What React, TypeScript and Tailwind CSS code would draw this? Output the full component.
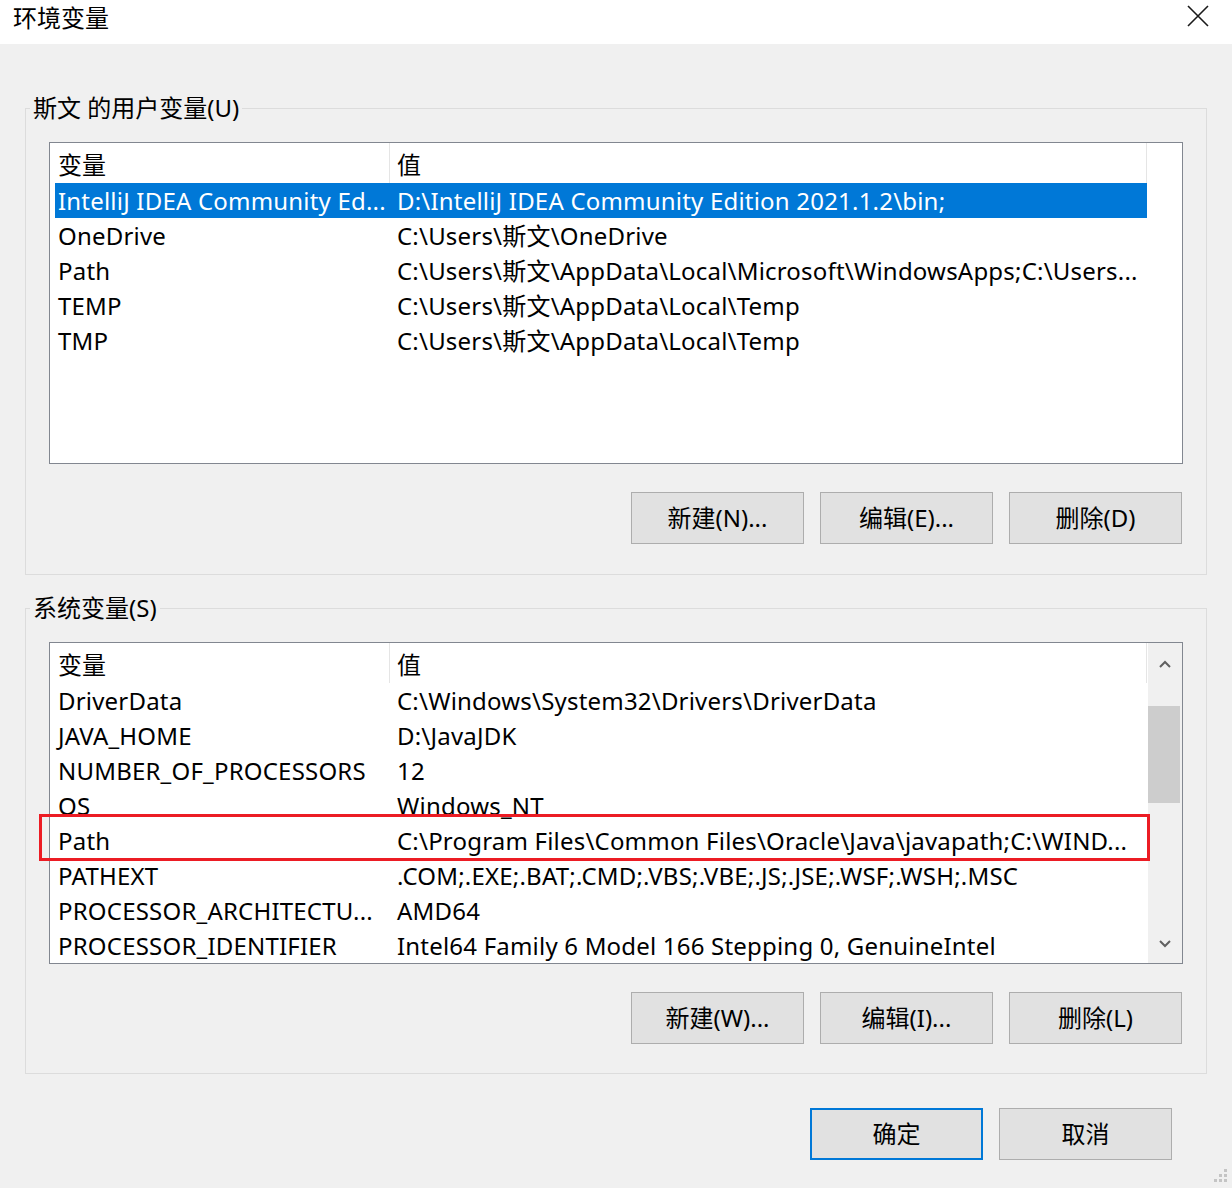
import React from "react";

const userVars: [string, string][] = [
  ["IntelliJ IDEA Community Ed...", "D:\\IntelliJ IDEA Community Edition 2021.1.2\\bin;"],
  ["OneDrive", "C:\\Users\\斯文\\OneDrive"],
  ["Path", "C:\\Users\\斯文\\AppData\\Local\\Microsoft\\WindowsApps;C:\\Users..."],
  ["TEMP", "C:\\Users\\斯文\\AppData\\Local\\Temp"],
  ["TMP", "C:\\Users\\斯文\\AppData\\Local\\Temp"],
];

const sysVars: [string, string][] = [
  ["DriverData", "C:\\Windows\\System32\\Drivers\\DriverData"],
  ["JAVA_HOME", "D:\\JavaJDK"],
  ["NUMBER_OF_PROCESSORS", "12"],
  ["OS", "Windows_NT"],
  ["Path", "C:\\Program Files\\Common Files\\Oracle\\Java\\javapath;C:\\WIND..."],
  ["PATHEXT", ".COM;.EXE;.BAT;.CMD;.VBS;.VBE;.JS;.JSE;.WSF;.WSH;.MSC"],
  ["PROCESSOR_ARCHITECTU...", "AMD64"],
  ["PROCESSOR_IDENTIFIER", "Intel64 Family 6 Model 166 Stepping 0, GenuineIntel"],
];

function Header() {
  return (
    <div className="flex h-[40px] items-center">
      <div className="w-[340px] h-full flex items-center pt-[4px] pl-[8px] border-r border-[#e5e5e5]">变量</div>
      <div className="w-[757px] h-full flex items-center pt-[4px] pl-[7px] border-r border-[#e5e5e5]">值</div>
    </div>
  );
}

function Rows({ rows, selected }: { rows: [string, string][]; selected?: number }) {
  return (
    <div className="ml-[5px] w-[1092px] tracking-[0.2px]">
      {rows.map(([k, v], i) => (
        <div
          key={k + i}
          className={`flex h-[35px] items-center whitespace-nowrap ${i === selected ? "bg-[#0078d7] text-white" : ""}`}
        >
          <div className="w-[334px] pl-[3px]">{k}</div>
          <div className="pl-[8px]">{v}</div>
        </div>
      ))}
    </div>
  );
}

function Chevron({ up }: { up?: boolean }) {
  return (
    <svg width="12" height="8" viewBox="0 0 12 8">
      <polyline
        points={up ? "1,7 6,2 11,7" : "1,1 6,6 11,1"}
        fill="none"
        stroke="#606060"
        strokeWidth="2"
      />
    </svg>
  );
}

function Btn({ children, primary }: { children: React.ReactNode; primary?: boolean }) {
  return (
    <button
      className={`w-[173px] h-[52px] bg-[#e1e1e1] flex items-center justify-center text-black ${
        primary ? "border-2 border-[#0078d7]" : "border border-[#adadad]"
      }`}
    >
      {children}
    </button>
  );
}

export default function App() {
  return (
    <div className="w-[1232px] h-[1188px] bg-[#f0f0f0] text-[24px] text-black font-['Noto_Sans','Noto_Sans_CJK_SC',sans-serif] leading-[28px] overflow-hidden relative">
      {/* title bar */}
      <div className="h-[44px] bg-white flex items-start justify-between">
        <div className="pl-[13px] pt-[4px]">环境变量</div>
        <svg width="22" height="22" viewBox="0 0 22 22" className="mt-[5px] mr-[23px]">
          <path d="M1 1 L21 21 M21 1 L1 21" stroke="#1a1a1a" strokeWidth="1.6" />
        </svg>
      </div>

      <div className="px-[25px]">
        {/* user vars */}
        <fieldset className="mt-[50px] border border-[#dcdcdc] px-[23px] pt-[20px] pb-[30px]">
          <legend className="-ml-[19px] px-[3px] leading-[28px]">斯文 的用户变量(U)</legend>
          <div className="w-[1134px] h-[322px] border border-[#828790] bg-white overflow-hidden">
            <Header />
            <Rows rows={userVars} selected={0} />
          </div>
          <div className="mt-[28px] flex justify-end gap-[16px] pr-[1px]">
            <Btn>新建(N)...</Btn>
            <Btn>编辑(E)...</Btn>
            <Btn>删除(D)</Btn>
          </div>
        </fieldset>

        {/* system vars */}
        <fieldset className="mt-[19px] border border-[#dcdcdc] px-[23px] pt-[20px] pb-[29px]">
          <legend className="-ml-[19px] px-[3px] leading-[28px]">系统变量(S)</legend>
          <div className="relative w-[1134px] h-[322px]">
            <div className="w-full h-full border border-[#828790] bg-white overflow-hidden flex">
              <div className="w-[1098px]">
                <Header />
                <Rows rows={sysVars} />
              </div>
              <div className="w-[34px] h-full bg-[#f0f0f0] flex flex-col items-center">
                <div className="h-[40px] flex items-center justify-center mt-[1px]">
                  <Chevron up />
                </div>
                <div className="mt-[22px] w-[32px] h-[97px] bg-[#cdcdcd] self-start" />
                <div className="flex-1" />
                <div className="h-[30px] flex items-center justify-center mb-[4px]">
                  <Chevron />
                </div>
              </div>
            </div>
            {/* highlight */}
            <div className="absolute left-[-10px] top-[172px] w-[1111px] h-[47px] border-[3px] border-[#ec1c24]" />
          </div>
          <div className="mt-[28px] flex justify-end gap-[16px] pr-[1px]">
            <Btn>新建(W)...</Btn>
            <Btn>编辑(I)...</Btn>
            <Btn>删除(L)</Btn>
          </div>
        </fieldset>
      </div>

      <div className="mt-[34px] flex justify-end gap-[16px] pr-[60px]">
        <Btn primary>确定</Btn>
        <Btn>取消</Btn>
      </div>

      <div className="flex justify-end pr-[4px] mt-[8px]">
        <svg width="16" height="16" viewBox="0 0 16 16">
          {[
            [12, 1],
            [7, 6],
            [12, 6],
            [2, 11],
            [7, 11],
            [12, 11],
          ].map(([x, y]) => (
            <rect key={`${x}-${y}`} x={x} y={y} width="3" height="3" fill="#c4c4c4" />
          ))}
        </svg>
      </div>
    </div>
  );
}
